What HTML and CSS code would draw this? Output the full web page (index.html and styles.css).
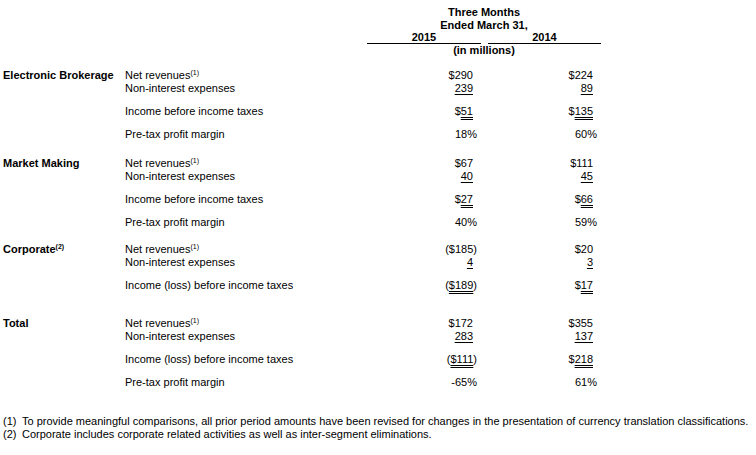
FILE: index.html
```html
<!DOCTYPE html>
<html>
<head>
<meta charset="utf-8">
<link rel="stylesheet" href="styles.css">
</head>
<body>
<div class="report">
  <div class="row head"><div class="span">Three Months</div></div>
  <div class="row head"><div class="span">Ended March 31,</div></div>
  <div class="row head years"><div class="yr yr1">2015</div><div class="yr yr2">2014</div></div>
  <div class="row head"><div class="span">(in millions)</div></div>

  <div class="seg first">
    <div class="row"><div class="name">Electronic Brokerage</div><div class="item">Net revenues<sup>(1)</sup></div><div class="val">$290</div><div class="val">$224</div></div>
    <div class="row"><div class="item">Non-interest expenses</div><div class="val"><span class="u1">239</span></div><div class="val"><span class="u1">89</span></div></div>
    <div class="row gap"><div class="item">Income before income taxes</div><div class="val">$<span class="u2">51</span></div><div class="val">$<span class="u2">135</span></div></div>
    <div class="row gap"><div class="item">Pre-tax profit margin</div><div class="val pct">18%</div><div class="val pct">60%</div></div>
  </div>

  <div class="seg mm">
    <div class="row"><div class="name">Market Making</div><div class="item">Net revenues<sup>(1)</sup></div><div class="val">$67</div><div class="val">$111</div></div>
    <div class="row"><div class="item">Non-interest expenses</div><div class="val"><span class="u1">40</span></div><div class="val"><span class="u1">45</span></div></div>
    <div class="row gap"><div class="item">Income before income taxes</div><div class="val">$<span class="u2">27</span></div><div class="val">$<span class="u2">66</span></div></div>
    <div class="row gap"><div class="item">Pre-tax profit margin</div><div class="val pct">40%</div><div class="val pct">59%</div></div>
  </div>

  <div class="seg corp">
    <div class="row"><div class="name">Corporate<sup>(2)</sup></div><div class="item">Net revenues<sup>(1)</sup></div><div class="val">($185<span class="rp">)</span></div><div class="val">$20</div></div>
    <div class="row"><div class="item">Non-interest expenses</div><div class="val"><span class="u1">4</span></div><div class="val"><span class="u1">3</span></div></div>
    <div class="row gap"><div class="item">Income (loss) before income taxes</div><div class="val">(<span class="u2">$189</span><span class="rp">)</span></div><div class="val">$<span class="u2">17</span></div></div>
  </div>

  <div class="seg total">
    <div class="row"><div class="name">Total</div><div class="item">Net revenues<sup>(1)</sup></div><div class="val">$172</div><div class="val">$355</div></div>
    <div class="row"><div class="item">Non-interest expenses</div><div class="val"><span class="u1">283</span></div><div class="val"><span class="u1">137</span></div></div>
    <div class="row gap"><div class="item">Income (loss) before income taxes</div><div class="val">(<span class="u2">$111</span><span class="rp">)</span></div><div class="val">$<span class="u2">218</span></div></div>
    <div class="row gap"><div class="item">Pre-tax profit margin</div><div class="val pct">-65%</div><div class="val pct">61%</div></div>
  </div>

  <div class="notes">
    <p class="note"><span class="num">(1)</span>To provide meaningful comparisons, all prior period amounts have been revised for changes in the presentation of currency translation classifications.</p>
    <p class="note"><span class="num">(2)</span>Corporate includes corporate related activities as well as inter-segment eliminations.</p>
  </div>
</div>
</body>
</html>
```
FILE: styles.css
```css
html, body {
  margin: 0;
  padding: 0;
  background: #ffffff;
}
body {
  font-family: "Liberation Sans", Arial, Helvetica, sans-serif;
  font-size: 11px;
  color: #000000;
}
.report {
  padding: 6px 0 0 3px;
}
.row {
  display: grid;
  grid-template-columns: 122px 242px 114px 120px;
  line-height: 13px;
  height: 13px;
  white-space: nowrap;
}
.head {
  font-weight: bold;
}
.head .span {
  grid-column: 3 / 5;
  text-align: center;
}
.years {
  line-height: 11px;
  height: 12px;
}
.yr {
  text-align: center;
  border-bottom: 1px solid #000;
  height: 11px;
}
.yr1 {
  grid-column: 3;
}
.yr2 {
  grid-column: 4;
  margin-left: 7px;
}
.name {
  grid-column: 1;
  font-weight: bold;
}
.item {
  grid-column: 2;
}
.val {
  text-align: right;
  padding-right: 8px;
}
.val.pct {
  padding-right: 4px;
}
.rp {
  margin-right: -4px;
}
.u1 {
  text-decoration: underline;
  text-decoration-thickness: 1px;
  text-underline-offset: 2px;
}
.u2 {
  text-decoration: underline double;
  text-decoration-thickness: 1px;
  text-underline-offset: 2px;
}
sup {
  font-size: 7px;
  line-height: 0;
  vertical-align: 4px;
}
.gap {
  margin-top: 10px;
}
.seg.first {
  margin-top: 12px;
}
.seg.mm {
  margin-top: 16px;
}
.seg.corp {
  margin-top: 14px;
}
.seg.total {
  margin-top: 25px;
}
.notes {
  margin-top: 26px;
}
.note {
  margin: 0;
  line-height: 13px;
  white-space: nowrap;
}
.num {
  display: inline-block;
  width: 19px;
}
```
